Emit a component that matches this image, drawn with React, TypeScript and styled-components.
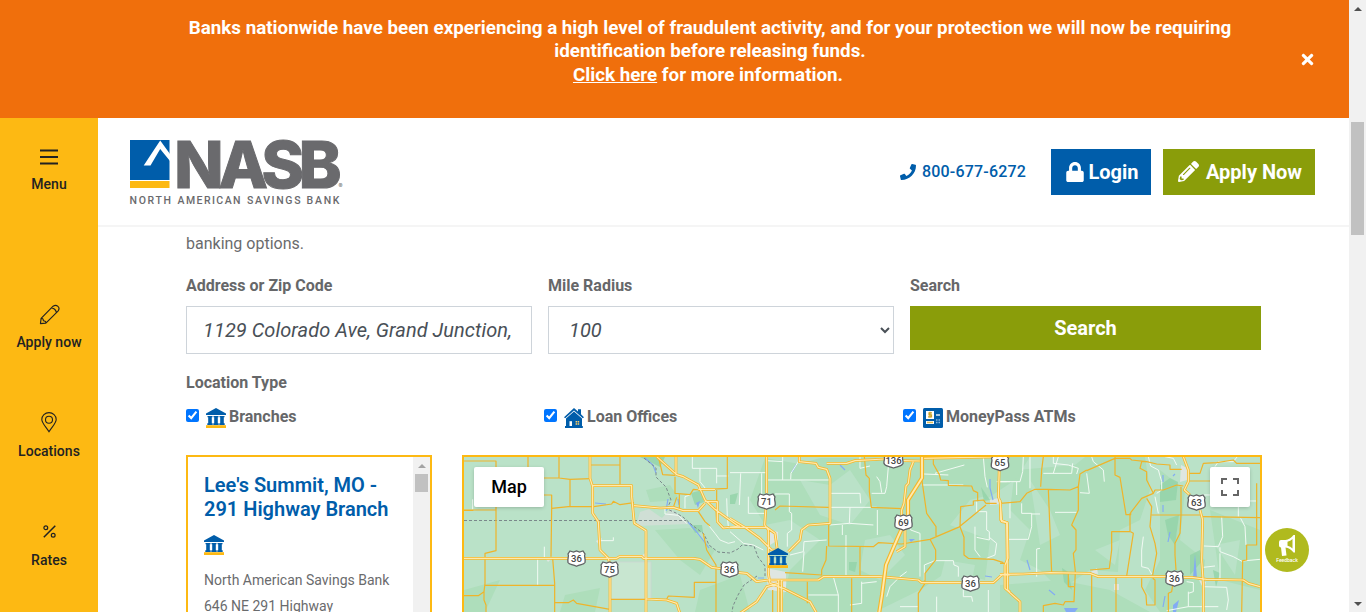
import React from "react";
import styled, { createGlobalStyle } from "styled-components";
import { FaTimes, FaPhone, FaLock, FaPencilAlt } from "react-icons/fa";

const Global = createGlobalStyle`
  * { box-sizing: border-box; }
  body { margin: 0; overflow: hidden; font-family: Roboto, "Liberation Sans", sans-serif; font-size: 16px; line-height: 24px; color: #666; background: #fff; }
  svg { display: block; flex: none; }
`;

const Page = styled.div`display: flex; height: 612px; width: 1366px; overflow: hidden;`;
const Site = styled.div`width: 1349px; display: flex; flex-direction: column; height: 100%;`;

const Banner = styled.div`
  height: 118px; flex: none; background: #f06f0c; color: #fff;
  display: grid; grid-template-columns: 142px 1136px 71px; padding-top: 16px;
`;
const BannerText = styled.p`
  grid-column: 2; margin: 0.6px 0 0; text-align: center; font-weight: 700; font-size: 18.8px; line-height: 23.5px;
  a { color: inherit; text-decoration: underline; }
`;
const MoreInfo = styled.span`padding-right: 4px;`;
const CloseButton = styled.button`
  height: 20px; margin: 33px 0 0 22px; padding: 0; border: 0; background: none; color: #fff;
  display: flex; align-items: center; justify-content: center; width: 14px;
`;

const Body = styled.div`display: flex; flex: 1; min-height: 0;`;
const Sidebar = styled.nav`
  width: 98px; flex: none; background: #fdb913; color: #222;
  display: flex; flex-direction: column; padding-top: 27px;
`;
const SideItem = styled.a<{ $gap: number }>`
  display: flex; flex-direction: column; align-items: center; height: 49px; margin-bottom: ${p => p.$gap}px;
  font-size: 14px; font-weight: 500; line-height: 20px; letter-spacing: 0.03px;
`;
const SideIcon = styled.span<{ $lift?: number }>`
  height: 24px; margin-bottom: 5px; display: flex; align-items: center; padding-bottom: ${p => p.$lift ?? 0}px;
`;

const Main = styled.main`flex: 1; min-width: 0; display: flex; flex-direction: column; overflow: hidden;`;
const Header = styled.header`
  height: 109px; flex: none; border-bottom: 2px solid #f5f5f5; padding: 0 34px 0 31px;
  display: flex; align-items: center;
`;
const Phone = styled.a`
  margin-left: auto; margin-right: 25px; display: flex; align-items: center; gap: 6px;
  color: #005daa; font-weight: 500; letter-spacing: 0.18px;
`;
const HeaderButton = styled.a<{ $bg: string; $w: number; $gap: number }>`
  height: 46px; width: ${p => p.$w}px; background: ${p => p.$bg}; color: #fff; gap: ${p => p.$gap}px;
  display: flex; align-items: center; justify-content: center; font-size: 20px; font-weight: 700; padding-left: 2px;
  & + & { margin-left: 12px; }
`;

const Content = styled.div`padding: 5px 87px 0 88px; display: flex; flex-direction: column;`;
const Intro = styled.p`margin: 0 0 18px; color: #6a6b6d;`;
const SearchRow = styled.form`display: grid; grid-template-columns: 346px 346px 351px; column-gap: 16px; align-items: start;`;
const Field = styled.label`display: flex; flex-direction: column; gap: 8px; font-weight: 700; color: #666769;`;
const fieldCss = `
  height: 48px; width: 100%; border: 1px solid #ced4da; border-radius: 0; background: #fff; color: #495057;
  font: italic 400 20px Roboto, "Liberation Sans", sans-serif; padding: 0 16px; outline: none;
`;
const Input = styled.input`${fieldCss} letter-spacing: 0.04px;`;
const Select = styled.select`${fieldCss} padding-right: 0;`;
const SearchButton = styled.button`
  height: 44px; border: 0; background: #8a9d0a; color: #fff; font: 700 20px Roboto, "Liberation Sans", sans-serif; padding: 0;
`;
const TypeTitle = styled.div`margin-top: 17px; font-weight: 700; color: #666769;`;
const TypeRow = styled.div`display: grid; grid-template-columns: 358px 359px 358px; margin-top: 10px;`;
const TypeOption = styled.label`
  display: flex; align-items: center; font-weight: 700; color: #666769; height: 24px;
  input { width: 13px; height: 13px; margin: 0 7px 3px 0; }
  svg { margin: 1px 3px 0 0; }
`;

const Results = styled.div`display: flex; gap: 30px; margin-top: 26px; height: 157px;`;
const ListBox = styled.div`
  width: 246px; height: 300px; border: 2px solid #fdb913; display: flex; overflow: hidden; flex: none;
`;
const Branch = styled.div`flex: 1; padding: 16px 0 0 16px; white-space: nowrap;
  h3 { margin: 0 0 14px; color: #005daa; font-size: 20px; line-height: 24px; font-weight: 600; }
  p { margin: 12px 0 0; font-size: 14px; line-height: 26px; color: #6a6b6d; }
`;
const Track = styled.div`width: 17px; flex: none; background: #f1f1f1; display: flex; flex-direction: column; align-items: center;`;
const Arrow = styled.span<{ $dir: "up" | "down"; $color: string }>`
  width: 0; height: 0; border: 4px solid transparent;
  ${p => p.$dir === "up" ? `border-top: 0; border-bottom-color: ${p.$color};` : `border-bottom: 0; border-top-color: ${p.$color};`}
  margin: 7px 0 6px;
`;
const Thumb = styled.span<{ $h: number; $top: number }>`
  width: 13px; height: ${p => p.$h}px; margin-top: ${p => p.$top}px; background: #c1c1c1;
`;
const Spring = styled.span`flex: 1;`;

const MapBox = styled.div`width: 800px; height: 300px; flex: none; border: 2px solid #fdb913; position: relative; overflow: hidden;`;
const MapControl = styled.button<{ $side: "left" | "right"; $w: number }>`
  position: absolute; top: 10px; ${p => p.$side}: 10px; width: ${p => p.$w}px; height: 40px;
  display: flex; align-items: center; justify-content: center; padding: 0 0 1px; border: 0; border-radius: 2px;
  background: #fff; color: #000; box-shadow: 0 1px 4px -1px rgba(0,0,0,.3);
  font: 500 18px Roboto, "Liberation Sans", sans-serif;
`;
const Feedback = styled.button`
  position: fixed; left: 1265px; top: 528px; width: 44px; height: 44px; border: 0; padding: 6px 0 0;
  border-radius: 50%; background: #b0ba1e; color: #fff; display: flex; flex-direction: column; align-items: center;
  font: 500 5px/7px Roboto, sans-serif;
`;

const BankShape = () => (
  <>
    <path d="M10 0 20 5.500V7H0V5.500Z M1.500 8h5v1.200H5.800v6h.9V17H1.300v-1.800h.9v-6h-.7Z M7.500 8h5v1.200h-.7v6h.9V17H7.300v-1.800h.9v-6h-.7Z M13.500 8h5v1.200h-.7v6h.9V17h-5.400v-1.800h.9v-6h-.7Z" fill="#005daa" />
    <rect x="0" y="17.2" width="20" height="2.8" fill="#fdb913" />
  </>
);
const BankIcon = () => <svg width="20" height="20" viewBox="0 0 20 20"><BankShape /></svg>;
const HouseIcon = () => (
  <svg width="20" height="20" viewBox="0 0 20 20">
    <path d="M10 0 14 3.4V1.2h3v5l3 3-1.2 1L10 2.5 1.2 10.3 0 9.2Z" fill="#005daa" />
    <path d="M10 3.5 18 10.5V18h.8v2H1v-2h1v-7.5Z" fill="#005daa" />
    <path d="M5.5 13.2H8V18H5.5Z" fill="#fff" />
    <path d="M11.6 13h1.5v1.6h-1.5ZM13.7 13h1.5v1.6h-1.5ZM11.6 15.2h1.5v1.5h-1.5ZM13.7 15.2h1.5v1.5h-1.5Z" fill="#fdd067" />
  </svg>
);
const AtmIcon = () => (
  <svg width="20" height="20" viewBox="0 0 20 20">
    <rect width="20" height="20" rx="1.5" fill="#005daa" />
    <rect x="3" y="3" width="8" height="8" fill="#fff" />
    <path d="M9 4.8H6v2h2.5v2H5M7 3.8v6" fill="none" stroke="#c9a227" strokeWidth="1.2" />
    <path d="M13 7h4" stroke="#fff" strokeWidth="1.3" />
    <path d="M13 12h1.5M15.5 12H17M13 14.4h1.5M15.5 14.4H17" stroke="#8bb6dc" strokeWidth="1.5" />
    <rect x="3" y="13" width="8" height="3" fill="#fff" />
    <rect x="4" y="13.7" width="6" height="1.5" fill="#e2bd55" />
  </svg>
);

const Logo = () => (
  <svg width="220" height="100" viewBox="129 122 220 100" fontFamily="Inter, 'Liberation Sans', sans-serif">
    <path d="M130 140h39.500v40H130Z" fill="#005daa" />
    <path d="M143.700 165.500 160.200 140.500 170 154V161L160.200 149 150.500 165.500Z" fill="#fff" />
    <path d="M130 181h39.500v7H130Z" fill="#fdb913" />
    <g fill="#6a6a6d" stroke="#6a6a6d" strokeWidth="1" fontSize="65" fontWeight="800">
      <text transform="translate(174.300 187.500) scale(.99 1)" letterSpacing="-5.200">NASB</text>
    </g>
    <text x="338.500" y="188" fontSize="6" fill="#6a6a6d">®</text>
    <g fill="#6a6a6d" fontSize="10.500" fontWeight="500" fontFamily="Roboto, sans-serif">
      <text x="129.500" y="204" textLength="41.500">NORTH</text>
      <text x="177.500" y="204" textLength="63">AMERICAN</text>
      <text x="247" y="204" textLength="53.500">SAVINGS</text>
      <text x="306.500" y="204" textLength="33">BANK</text>
    </g>
  </svg>
);

const Shield = ({ x, y, n }: { x: number; y: number; n: string }) => (
  <g transform={`translate(${x} ${y})`}>
    <path
      d={n.length > 2
        ? "M-8-7.500-4-6.500 0-7.500 4-6.500 8-7.500 9.500-4.500C8-2 10 0 9.500 3 8.500 6 5 5.500 0 7.500-5 5.500-8.500 6-9.500 3-10 0-8-2-9.500-4.500Z"
        : "M-6.500-7.500-3-6.500 0-7.500 3-6.500 6.500-7.500 8.500-4.500C7-2 9.500 0 8.500 4 7 6.500 4 5.500 0 7.800-4 5.500-7 6.500-8.500 4-9.500 0-7-2-8.500-4.500Z"}
      fill="#fff" stroke="#5f6164" strokeWidth="1.300"
    />
    <text y="3.400" textAnchor="middle" fontSize="9.500" fontWeight="500" fill="#444" fontFamily="Roboto, sans-serif">{n}</text>
  </g>
);

const MINOR = [
  { x: 460, d: ["M0 33H108V302L75 310V400L72 425 55 437H10M72 425V450L78 465V490M10 180H108M0 181H40M75 406H284", "M204 20V52M297 20V84L330 88V170M252 84H297M330 88 392 86M275 175 325 170 401 170 455 162 460 154 480 164 522 158M252 135H275V175L273 320M278 325 284 400V490M284 458 325 458 340 450 350 460 450 478M390 45H480V103M480 20V45M452 448H560", "M595 20 608 74 645 76M802 20V115L745 118M645 80V130L690 134 700 118 720 120M658 130V180M640 172 650 142M770 120V190M715 185 735 215 750 228M560 448H620L625 438 703 442V397H768M730 250 740 300 768 345V490M768 180 770 215"] },
  { x: 730, d: ["M403 20 408 75 418 85V125L424 172 515 176M610 20V42L628 74 632 90 655 92V106L725 108 730 122 743 128V155M575 85 590 190 618 230V260M135 180 150 168 296 172M296 225V288L430 290 445 278 515 282 600 268 690 230 692 170 730 165V153L760 150 768 160M688 230 768 165M768 160H800", "M600 268 617 300V330L585 370V400L565 430V490M690 230 702 262V315L715 325 790 328 820 338M290 288 288 330 275 360V375L165 368M390 290V380M365 385V490M232 395V460M128 420V490"] },
  { x: 1000, d: ["M130 20 125 60 122 110M0 160 60 155 80 130 105 118H145L210 120 235 110 240 72 260 60M145 118 155 368M235 110V180L215 225 228 240V300L220 310 226 365 222 455 195 455 190 465 165 460 130 467V490M205 370V410H222M260 62 345 25M345 20V75L360 82 378 194H392V188L425 145 460 130 465 120H490L530 105 550 108M345 25 390 25 395 30 440 35", "M390 190V245H335V300L328 355 270 360M392 245 400 250 380 378M460 130 440 90V65L420 55 425 35 440 35 470 42 510 45V58H545M440 145 455 170 450 230 465 280 470 310 458 375M425 385V410L438 435 440 465H465V390L458 385M455 195H605M543 110V195L540 250 525 280V315L528 360M518 405 515 425 505 430V490M605 200 780 203M568 70H600L610 40 650 38 700 30 710 40H780M568 93H630M770 100V285H740V330L728 332 725 490M275 375V490M348 380V490M0 340H15"] },
];

const MAJOR = [
  { x: 460, d: ["M390 20V85L398 110V190L415 215 420 300 445 325 450 345V490M398 107H515V140L523 220 558 242V490M10 325H230L470 325 480 319H545L550 325H700L720 328 755 352 790 357M522 167 600 174 640 172 670 182H715L735 160M590 20 650 74 670 80 715 105 735 150 765 178 840 232M648 20V74M735 155H772V215L790 234 840 228M715 118H765M560 447 620 450 650 460 660 490"] },
  { x: 730, d: ["M110 20V130M108 170 104 225 115 240V370L120 400M0 205 45 232 90 265 125 300 140 300M0 232H110L135 250 142 300M208 20V35L258 40 265 52 290 58 300 85V220L235 225 215 240 210 270 175 305M290 40H350L375 32 465 27M520 32 570 33M570 25 840 20M550 35 540 60 535 100 528 108 522 160 515 180V205M525 240 525 290 500 305M0 365 50 370 80 395 115 390H265L280 380H450L565 390 575 398H695M750 398H790L815 375H840M30 490 80 455 110 410 145 400M120 400 160 415 200 435 240 455 260 490M808 50 805 140 812 160V210L830 218 833 420 840 425M145 390V490M155 390V490"] },
  { x: 1000, d: ["M0 150 5 215 22 218 24 325 15 345V415L60 455V490M0 373 70 372 150 368 270 370 295 380H500M550 382H575L620 388 730 390 745 400 780 410M550 20 565 60V95L553 120 570 135M600 180 608 210 605 330 610 400V490"] },
];

const STREETS = [
  { x: 460, d: ["M253 290V325M233 327V406M38 148V178M415 272H460V262M697 20V55H770V78H805M720 55V95L740 120M770 78V100M690 135 675 140V175M800 145 802 200 805 230M615 175V192L655 196 680 220M745 225 765 250 780 270 805 280 825 275"] },
  { x: 730, d: ["M0 68H110M32 70 28 165M95 70V135M55 140V190H105M110 90H300M158 20V90M158 35 110 32M208 30 183 70 182 88M135 132H178V185L185 190V240L172 250V290M300 130H390L392 160M300 160V130M300 172H440M360 172 358 220 300 225M358 220 430 225M337 225V255M348 255V375M390 20V55L420 48M475 50 470 110 465 130H425M440 80 450 95 455 128M442 180V255M542 220V240L570 250V380M575 105H700M580 72 655 75M615 70 703 45", "M0 245 40 280 70 285 100 300M180 315 220 305 222 275 290 270M222 305 218 365M235 435H325L310 380M325 435V490M360 465 395 460V395M395 400 440 395M470 440 480 410 510 380 530 365M510 470H565M583 390V345L615 332H670L672 345 685 350V380M760 20 765 80 772 112M740 155V185H770V240L778 245V270L740 262M735 230V300L750 320M778 262 800 280 795 315 770 325M620 440V490M700 415V440H725L728 455M775 420V490M800 95H840"] },
  { x: 1000, d: ["M70 20 68 65 60 95H0M50 95V135M0 95H20M90 20V115M160 20V40L205 45 235 55 230 72M130 70H215L218 40M175 20 160 70M275 20 280 35 310 60 313 95M65 160V190H95V230L85 268H25M95 192H120M30 155V205M165 187H230M260 70 268 130 240 128M110 380V297L120 295M430 260 425 300V350L445 355 455 372M445 20 452 48 475 60 485 95V120L470 130M465 140 475 190M495 20 520 25 530 45M645 50 655 35H700L712 20M605 135H630M665 200 668 260 655 290 612 288M660 292V305L700 320 728 335M660 310V385M722 205 735 230 738 285M610 352 645 348M715 150V200M748 153H770M728 333 780 328M565 425V470L500 482M565 470H655M610 410 680 412 685 450 680 480M560 395 580 398V425L565 430"] },
];

type Layer = { x: number; d: string[] }[];
const Roads = ({ layer, color, width }: { layer: Layer; color: string; width: number }) => (
  <g fill="none" stroke={color} strokeWidth={width} strokeLinejoin="round">
    {layer.map(s => <g key={s.x} transform={`translate(${s.x} 450) scale(.33333)`}>{s.d.map(d => <path key={d} d={d} />)}</g>)}
  </g>
);

const INTERSTATE = "M922 457V478L908 500V515L898 537 886 565 882 595 879 614";

const BranchMap = () => (
  <svg width="796" height="296" viewBox="464 457 796 296">
    <rect x="464" y="457" width="796" height="296" fill="#bae2c8" />
    <g fill="#aedebb">
      <path d="M765 458 800 464 820 458 990 457V495L970 500 950 525 990 540 985 580 950 570 920 590 875 612H780L790 570 820 540 790 520 765 525 750 500Z" />
      <path d="M1015 470 1075 465 1085 457H1145L1150 490 1140 520 1120 530 1118 572 1090 570 1060 590 1040 570 1020 560 1030 530 1010 510Z" />
      <path d="M1160 470 1185 490 1180 540 1205 560 1200 612H1160L1145 590 1160 560ZM1210 510 1260 530V590L1220 580ZM985 457H1030L1015 480 985 500Z" />
      <path d="M646 490 670 485 680 500 650 502ZM655 530 690 528 715 550 700 575 680 560ZM565 595 600 588 595 612H560ZM700 590 740 575 750 612H695ZM464 590 500 580 485 612H464ZM1000 585 1060 580 1110 590 1150 612H1000Z" />
    </g>
    <g fill="#bae2c8">
      <path d="M800 480 830 485 850 470 870 500 850 525 820 515ZM865 540 890 535 905 555 880 580 860 570ZM945 560 975 565 970 590 940 580ZM1030 480 1050 510 1060 535 1040 545ZM1095 550 1120 540 1115 565ZM1215 545 1240 540 1235 575Z" />
    </g>
    <g fill="#94d3a9" opacity=".85">
      <path d="M640 457 665 457 660 467 650 462ZM691 493 702 490 704 502 695 505ZM690 525 702 525 703 532 695 533ZM1160 485 1170 478 1178 482 1176 500 1160 502ZM1165 520 1179 515 1175 545 1168 535ZM981 487 990 500 984 501ZM849 562 857 562 855 572 849 570ZM730 495 738 493 735 504H730ZM1190 555 1200 550 1203 560 1190 575ZM1062 568 1068 572 1072 590 1064 582ZM1213 570 1220 573 1216 587Z" />
    </g>
    <path d="M612 562H651V599H610Z" fill="#c8e6d0" stroke="#cdd5d2" strokeWidth=".8" />
    <path d="M636 526 640 512 649 509 662 518 670 509 680 515 689 524Z" fill="#cfdfd5" />
    <g fill="#dfe6e2">
      <path d="M1181 465 1187 468V480L1180 482ZM766 568 786 572V592L768 590ZM770 530 778 532 778 540 770 545ZM990 500 998 498 1001 504 990 505ZM1089 573 1097 568 1098 574ZM1114 584H1119V590H1114ZM1199 580 1206 582 1204 590ZM641 556 647 552V558ZM546 559H551L548 562ZM596 541 602 538 600 546Z" />
    </g>
    <g fill="none" stroke="#83abf3" strokeWidth="1.200">
      <path d="M645 458 653 465 656 473M666 511 668 499M678 499 679 505M688 522 695 530 703 540 709 548M595 503 606 504M796 465 792 472M840 465 845 470M990 479V488L993 500M758 578H764M985 576 992 577M1163 505V512M1163 475V482M1170 532 1168 542M1173 476 1175 474M1027 560 1030 570M1049 590 1055 595M1165 596 1163 607" />
    </g>
    <path d="M1195 554 1197 578H1193ZM1064 608H1078L1075 612H1066ZM1173 605 1179 600 1176 612H1173ZM909 539 915 539 911 542ZM696 503 700 501 698 508Z" fill="#83abf3" />
    <g fill="none" stroke="#7a888a" strokeWidth="1" strokeDasharray="3 2">
      <path d="M464 520.500H686M644 458 656 468 656 477 666 487 671 500 667 509 676 513 683 517 692 525 704 534 709 545 718 552 730 553 738 549 742 545 754 546 758 557 765 566 765 576M757 576 744 585 738 595 733 606 732 612" />
    </g>
    <Roads layer={STREETS} color="#f2faf4" width={3} />
    <Roads layer={MINOR} color="#efb42a" width={3.6} />
    <Roads layer={MAJOR} color="#f5b72a" width={8.2} />
    <Roads layer={MAJOR} color="#ffeaae" width={3.6} />
    <path d={INTERSTATE} fill="none" stroke="#f5b72a" strokeWidth="4.200" />
    <path d={INTERSTATE} fill="none" stroke="#ffeaae" strokeWidth="1.900" />
    <Shield x={576.500} y={558.500} n="36" />
    <Shield x={609.500} y={569.500} n="75" />
    <Shield x={729.500} y={569.500} n="36" />
    <Shield x={766.500} y={501.500} n="71" />
    <Shield x={893.500} y={460.500} n="136" />
    <Shield x={903.500} y={522.500} n="69" />
    <Shield x={1000} y={463} n="65" />
    <Shield x={970.500} y={583.500} n="36" />
    <Shield x={1174.500} y={578.500} n="36" />
    <Shield x={1196.500} y={502.500} n="63" />
    <g transform="translate(768 548)"><BankShape /></g>
  </svg>
);

export default function App() {
  return (
    <>
      <Global />
      <Page>
        <Site>
          <Banner>
            <BannerText>
              Banks nationwide have been experiencing a high level of fraudulent activity, and for your protection we will now be requiring<br />
              identification before releasing funds.<br />
              <MoreInfo><a>Click here</a> for more information.</MoreInfo>
            </BannerText>
            <CloseButton aria-label="Close"><FaTimes size={17} /></CloseButton>
          </Banner>
          <Body>
            <Sidebar>
              <SideItem $gap={109}>
                <SideIcon><svg width="18" height="16" viewBox="0 0 18 16"><path d="M0 1.500h18M0 8h18M0 14.500h18" stroke="#222" strokeWidth="1.800" /></svg></SideIcon>
                Menu
              </SideItem>
              <SideItem $gap={60}>
                <SideIcon $lift={2}>
                  <svg width="21" height="21" viewBox="0 0 22 22" fill="none" stroke="#222" strokeWidth="1.200" strokeLinejoin="round">
                    <path d="M1.500 20.500 2.200 15 14.800 2.300Q17.500.5 19.800 2.500T19.900 7.400L7.200 20 1.500 20.500ZM2.200 15Q4.600 14.900 4.600 17.500 7.300 17.500 7.200 20M13.300 4Q17.500 4.800 18.200 8.900" />
                  </svg>
                </SideIcon>
                Apply now
              </SideItem>
              <SideItem $gap={60}>
                <SideIcon $lift={3}>
                  <svg width="16" height="21" viewBox="0 0 16 21" fill="none" stroke="#222" strokeWidth="1.100">
                    <path d="M8 19.800C5 15 .8 11 .8 7.500a7.200 6.900 0 0 1 14.400 0C15.200 11 11 15 8 19.800Z" /><circle cx="8" cy="7.700" r="3.500" />
                  </svg>
                </SideIcon>
                Locations
              </SideItem>
              <SideItem $gap={0}>
                <SideIcon $lift={4}>
                  <svg width="13" height="13" viewBox="0 0 13 13" fill="none" stroke="#222" strokeWidth="1.200">
                    <path d="M.8 12.200 12.300.8" strokeWidth="1.500" /><circle cx="2.800" cy="2.800" r="1.900" /><circle cx="10.200" cy="10.300" r="1.900" />
                  </svg>
                </SideIcon>
                Rates
              </SideItem>
            </Sidebar>
            <Main>
              <Header>
                <Logo />
                <Phone><FaPhone size={16} />800-677-6272</Phone>
                <HeaderButton $bg="#005daa" $w={100} $gap={3}><FaLock size={20} />Login</HeaderButton>
                <HeaderButton $bg="#8a9d0a" $w={152} $gap={7}><FaPencilAlt size={21} />Apply Now</HeaderButton>
              </Header>
              <Content>
                <Intro>banking options.</Intro>
                <SearchRow>
                  <Field>Address or Zip Code<Input defaultValue="1129 Colorado Ave, Grand Junction," /></Field>
                  <Field>Mile Radius<Select defaultValue="100"><option>100</option></Select></Field>
                  <Field>Search<SearchButton type="button">Search</SearchButton></Field>
                </SearchRow>
                <TypeTitle>Location Type</TypeTitle>
                <TypeRow>
                  <TypeOption><input type="checkbox" defaultChecked /><BankIcon />Branches</TypeOption>
                  <TypeOption><input type="checkbox" defaultChecked /><HouseIcon />Loan Offices</TypeOption>
                  <TypeOption><input type="checkbox" defaultChecked /><AtmIcon />MoneyPass ATMs</TypeOption>
                </TypeRow>
                <Results>
                  <ListBox>
                    <Branch>
                      <h3>Lee's Summit, MO -<br />291 Highway Branch</h3>
                      <BankIcon />
                      <p>North American Savings Bank<br />646 NE 291 Highway</p>
                    </Branch>
                    <Track><Arrow $dir="up" $color="#a3a3a3" /><Thumb $h={18} $top={0} /></Track>
                  </ListBox>
                  <MapBox>
                    <BranchMap />
                    <MapControl $side="left" $w={70}>Map</MapControl>
                    <MapControl $side="right" $w={40} aria-label="Full screen">
                      <svg width="18" height="18" viewBox="0 0 18 18" fill="none" stroke="#666" strokeWidth="2"><path d="M1 6V1H6M12 1H17V6M17 12V17H12M6 17H1V12" /></svg>
                    </MapControl>
                  </MapBox>
                </Results>
              </Content>
            </Main>
          </Body>
        </Site>
        <Track>
          <Arrow $dir="up" $color="#505050" />
          <Thumb $h={113} $top={105} />
          <Spring />
          <Arrow $dir="down" $color="#505050" />
        </Track>
      </Page>
      <Feedback>
        <svg width="18" height="23" viewBox="0 0 18 23"><path d="M1 8Q1 6 3 6H7.500Q12 5.500 15.500 1H17V18.500H15.500Q12 14 7.500 13.500L8.500 21.500 4 22 3 13.500Q1 13.500 1 11.500ZM9.500 7.800V11.800Q12.500 12.500 14.500 14.500V5Q12.500 7 9.500 7.800Z" fill="#fff" fillRule="evenodd" /></svg>
        Feedback
      </Feedback>
    </>
  );
}
